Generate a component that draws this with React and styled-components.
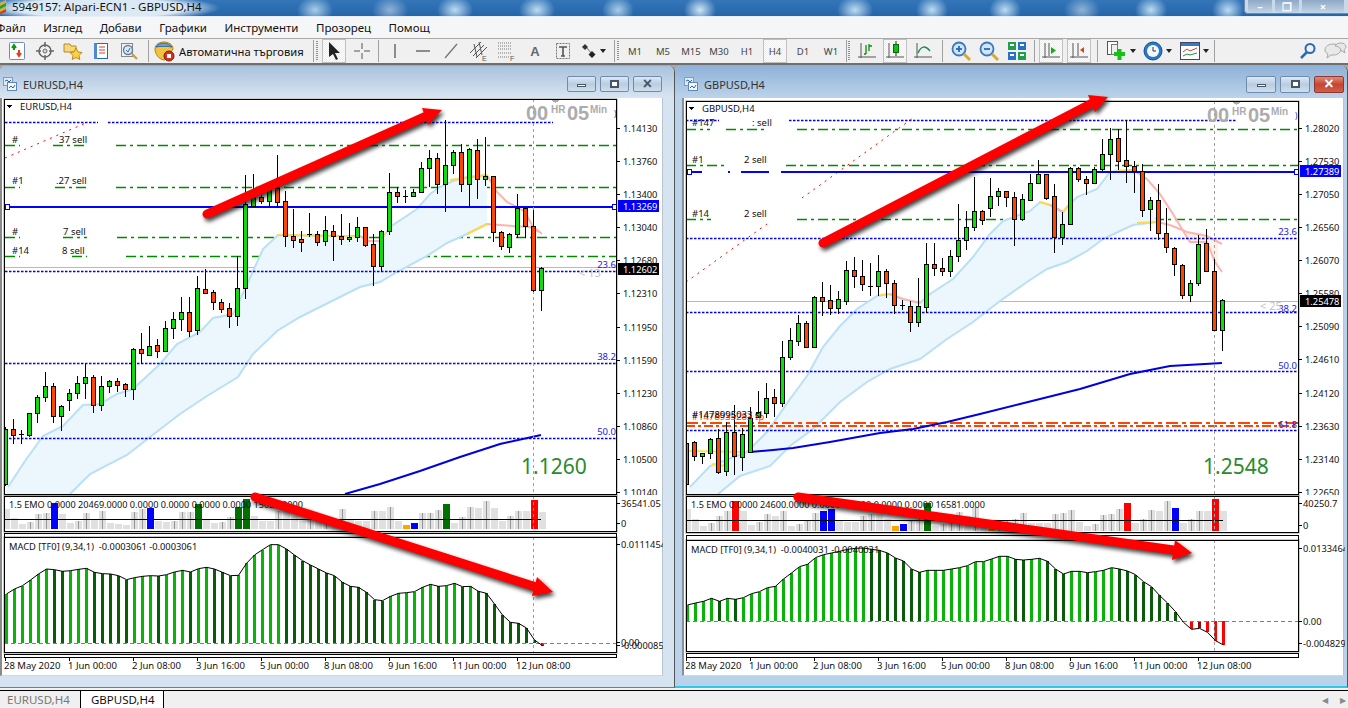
import React from 'react';
import styled, { createGlobalStyle } from 'styled-components';

const GlobalStyle = createGlobalStyle`
	html, body {
		margin: 0;
		padding: 0;
		background: #f0f0f0;
		overflow: hidden;
	}
	body {
		font-family: "Noto Sans", "Liberation Sans", sans-serif;
	}
`;

// candles: wick top, body top, body bottom, wick bottom, 1 = bull
const eurCandles = [
	[428, 430, 485, 487, 1], [420, 430, 436, 445, 0], [431, 435, 435, 445, 0], [414, 414, 436, 438, 1],
	[396, 398, 414, 424, 1], [373, 387, 398, 403, 1], [384, 387, 417, 424, 0], [406, 407, 417, 432, 1],
	[390, 394, 401, 412, 1], [377, 384, 394, 400, 1], [365, 378, 384, 400, 1], [376, 378, 406, 414, 0],
	[377, 387, 406, 412, 1], [381, 382, 387, 394, 1], [379, 382, 386, 393, 0], [384, 385, 390, 398, 0],
	[349, 350, 390, 401, 1], [334, 350, 354, 365, 0], [327, 347, 356, 357, 1], [340, 346, 352, 359, 0],
	[322, 329, 352, 353, 1], [313, 320, 329, 340, 1], [298, 313, 320, 332, 1], [298, 313, 332, 338, 0],
	[277, 289, 331, 336, 1], [270, 290, 294, 295, 0], [291, 293, 303, 311, 0], [300, 303, 310, 314, 0],
	[304, 309, 317, 329, 0], [257, 289, 317, 327, 1], [176, 205, 289, 300, 1], [175, 198, 207, 208, 1],
	[195, 198, 202, 205, 0], [188, 190, 202, 208, 1], [156, 189, 203, 209, 0], [192, 202, 237, 248, 0],
	[210, 237, 241, 249, 0], [232, 240, 243, 253, 0], [214, 235, 235, 238, 0], [232, 235, 243, 247, 0],
	[217, 231, 242, 247, 1], [226, 232, 237, 262, 0], [215, 237, 240, 246, 0], [224, 238, 240, 243, 1],
	[218, 228, 238, 243, 1], [228, 228, 246, 248, 0], [235, 245, 267, 287, 0], [231, 232, 267, 273, 1],
	[174, 193, 232, 236, 1], [188, 193, 197, 204, 0], [191, 197, 197, 204, 0], [190, 193, 197, 197, 1],
	[163, 169, 193, 194, 1], [151, 159, 169, 188, 1], [154, 159, 185, 195, 0], [121, 166, 185, 213, 1],
	[151, 153, 166, 175, 1], [145, 153, 185, 193, 0], [149, 150, 185, 209, 1], [140, 151, 180, 200, 0],
	[138, 177, 180, 187, 1], [177, 177, 233, 243, 0], [232, 233, 247, 251, 0], [234, 235, 248, 254, 1],
	[195, 209, 235, 239, 1], [208, 209, 227, 239, 0], [211, 227, 291, 293, 0], [268, 269, 291, 312, 1],
];

const gbpCandles = [
	[440, 444, 485, 487, 1], [442, 443, 457, 462, 0], [454, 454, 457, 465, 1], [439, 440, 454, 460, 1],
	[430, 439, 473, 475, 0], [423, 433, 472, 477, 1], [406, 433, 457, 476, 0], [429, 435, 458, 472, 1],
	[408, 419, 453, 453, 1], [392, 413, 418, 418, 1], [384, 399, 414, 419, 1], [390, 398, 404, 418, 0],
	[342, 358, 404, 408, 1], [329, 341, 358, 361, 1], [316, 324, 342, 347, 1], [322, 324, 348, 349, 0],
	[297, 298, 348, 349, 1], [283, 298, 302, 317, 0], [286, 301, 309, 316, 0], [292, 300, 309, 315, 1],
	[262, 271, 302, 306, 1], [258, 271, 277, 289, 0], [261, 277, 285, 292, 0], [264, 287, 287, 297, 0],
	[256, 272, 287, 297, 1], [270, 272, 284, 299, 0], [281, 284, 306, 315, 0], [301, 306, 306, 311, 0],
	[302, 307, 323, 333, 0], [279, 307, 323, 328, 1], [244, 265, 308, 314, 1], [244, 265, 269, 277, 0],
	[259, 269, 272, 277, 0], [251, 257, 272, 278, 1], [205, 241, 257, 263, 1], [212, 228, 241, 251, 1],
	[178, 212, 228, 232, 1], [211, 212, 221, 226, 0], [179, 197, 209, 218, 1], [189, 192, 197, 207, 1],
	[192, 192, 198, 208, 0], [193, 198, 220, 247, 0], [195, 200, 220, 222, 1], [175, 184, 201, 202, 1],
	[161, 175, 184, 185, 1], [175, 175, 199, 201, 0], [185, 197, 238, 254, 0], [213, 225, 238, 246, 1],
	[168, 169, 225, 226, 1], [168, 169, 180, 183, 0], [177, 180, 184, 196, 0], [168, 170, 184, 185, 1],
	[140, 155, 170, 172, 1], [129, 140, 155, 181, 1], [130, 139, 162, 171, 0], [121, 161, 167, 184, 0],
	[162, 167, 172, 194, 0], [165, 172, 211, 218, 0], [198, 201, 210, 232, 1], [185, 201, 234, 241, 0],
	[209, 234, 248, 254, 0], [248, 249, 265, 277, 0], [265, 266, 296, 300, 0], [281, 284, 296, 303, 1],
	[236, 245, 284, 287, 1], [230, 244, 272, 273, 0], [260, 272, 331, 332, 0], [300, 301, 331, 352, 1],
];

const eurVol = [
	90, 118, 135, 130, 105, 103, 72, 105, 133, 125, 103, 120, 97, 133, 135, 137, 100, 90, 88, 125, 128, 125, 100,
	98, 75, 123, 133, 130, 115, 85, 60, 110, 125, 125, 95, 95, 110, 125, 110, 120, 115, 125, 90, 120, 125, 125, 97,
	97, 85, 125, 138, 132, 103, 102, 93, 75, 132, 115, 85, 87, 67, 87, 125, 112, 97, 97, 63, 98,
];
const eurVolColors = { 6: '#0000ff', 18: '#0000ff', 24: '#007000', 29: '#007000', 30: '#007000', 50: '#ffa500', 51: '#0000ff', 55: '#007000', 66: '#ff0000' };

const gbpVol = [
	90, 120, 140, 133, 110, 97, 66, 97, 138, 130, 105, 110, 97, 140, 135, 125, 102, 97, 90, 125, 128, 130, 110,
	105, 105, 120, 142, 135, 125, 120, 72, 140, 135, 130, 100, 110, 85, 125, 150, 145, 125, 120, 103, 132, 132, 132,
	105, 103, 93, 130, 140, 135, 108, 105, 90, 72, 132, 120, 93, 96, 66, 87, 132, 120, 96, 96, 60, 96,
];
const gbpVolColors = { 6: '#ff0000', 17: '#0000ff', 18: '#0000ff', 26: '#ffa500', 27: '#0000ff', 30: '#007000', 38: '#ffa500', 55: '#ff0000', 61: '#0000ff', 66: '#ff0000' };

const eurMacd = [
	345, 330, 320, 303, 285, 270, 272, 277, 275, 271, 268, 280, 284, 285, 290, 302, 296, 292, 290, 291, 287, 279, 274,
	279, 269, 265, 270, 280, 290, 289, 253, 228, 212, 197, 197, 210, 228, 245, 258, 270, 282, 290, 310, 322, 325, 340,
	362, 365, 352, 343, 341, 338, 325, 316, 322, 320, 313, 323, 322, 337, 343, 375, 408, 430, 433, 447, 483, 500,
];
const gbpMacd = [
	378, 372, 367, 358, 367, 358, 361, 356, 344, 338, 326, 322, 300, 282, 263, 256, 236, 227, 222, 217, 211, 208, 207,
	211, 214, 222, 237, 246, 270, 280, 274, 274, 274, 270, 266, 260, 248, 248, 240, 232, 232, 241, 243, 241, 238, 247,
	270, 285, 277, 277, 281, 278, 274, 266, 270, 276, 287, 308, 323, 349, 372, 398, 430, 451, 448, 460, 485, 498,
];

const eurBand = {
	upper: [[5, 495], [8, 488], [25, 462], [43, 437], [63, 427], [83, 406], [100, 405], [117, 395], [133, 390], [160, 365], [177, 345], [200, 333], [213, 319], [233, 315], [245, 290], [263, 250], [278, 236], [340, 237], [360, 237], [368, 242], [380, 242], [390, 228], [417, 210], [430, 195], [440, 188], [453, 182], [467, 178], [487, 176]],
	lower: [[70, 495], [90, 475], [127, 456], [150, 438], [180, 415], [207, 397], [238, 378], [253, 355], [277, 332], [300, 318], [340, 298], [360, 288], [380, 283], [397, 273], [427, 257], [447, 244], [467, 235], [487, 225]],
	warm: [
		{ color: '#ffd84a', pts: [[278, 236], [340, 237], [360, 237]] },
		{ color: '#ffb3ae', pts: [[360, 237], [368, 242], [380, 242]] },
		{ color: '#ffd84a', pts: [[380, 242], [385, 235]] },
		{ color: '#ffd84a', pts: [[450, 181], [487, 176]] },
		{ color: '#ffb3ae', pts: [[487, 176], [497, 193], [507, 203], [517, 208], [525, 213], [533, 228], [542, 235]] },
		{ color: '#ffd84a', pts: [[467, 235], [487, 225]] },
		{ color: '#ffb3ae', pts: [[487, 225], [513, 227], [530, 228], [540, 233]] },
	],
	peach: null,
};

const gbpBand = {
	upper: [[686, 495], [690, 488], [710, 467], [747, 453], [767, 433], [790, 400], [807, 377], [823, 348], [840, 327], [857, 310], [877, 297], [890, 295], [903, 300], [920, 304], [930, 295], [953, 280], [973, 258], [990, 235], [1003, 222], [1030, 212], [1040, 203], [1050, 206], [1063, 213], [1068, 207], [1077, 198], [1097, 190], [1110, 173], [1118, 172], [1133, 171]],
	lower: [[718, 495], [740, 477], [770, 467], [790, 447], [813, 430], [840, 403], [867, 383], [890, 370], [920, 360], [947, 340], [973, 323], [1000, 302], [1027, 283], [1047, 270], [1067, 263], [1087, 252], [1103, 240], [1120, 232], [1133, 226], [1157, 223]],
	warm: [
		{ color: '#ffe44a', pts: [[688, 452], [745, 453]] },
		{ color: '#ffe44a', pts: [[712, 465], [722, 467], [728, 464]] },
		{ color: '#ffd84a', pts: [[880, 296], [890, 295]] },
		{ color: '#ffb3ae', pts: [[890, 295], [903, 300], [920, 304]] },
		{ color: '#ffd84a', pts: [[1040, 203], [1050, 206]] },
		{ color: '#ffb3ae', pts: [[1050, 206], [1063, 213]] },
		{ color: '#ffd84a', pts: [[1063, 213], [1068, 207]] },
		{ color: '#ffd84a', pts: [[1118, 172], [1133, 171]] },
		{ color: '#ffb3ae', pts: [[1133, 171], [1147, 180], [1160, 195], [1173, 215], [1182, 230], [1190, 243], [1207, 243], [1215, 263], [1222, 273]] },
		{ color: '#ffd84a', pts: [[1137, 224], [1157, 223]] },
		{ color: '#ffb3ae', pts: [[1157, 223], [1170, 226], [1187, 233], [1207, 237], [1222, 245]] },
	],
	peach: '1187,234 1207,238 1218,243 1218,270 1207,243 1190,243',
};

const eur = {
	symbol: 'EURUSD,H4',
	active: false,
	left: 4,
	plotWidth: 613,
	rows: { main: [100, 396], gapA: 1, vol: [497, 36], gapB: 1, stripA: 4, macd: [538, 116], gapC: 1, stripB: 3 },
	candles: eurCandles,
	vol: eurVol,
	volColors: eurVolColors,
	volBase: 530,
	volLine: 520,
	macd: eurMacd,
	macdZero: 644,
	band: eurBand,
	ma: [[345, 495], [380, 485], [420, 472], [460, 458], [500, 445], [541, 436]],
	blueDash: [[5, 98, 123], [108, 553, 123], [5, 617, 272], [5, 617, 364], [5, 617, 439]],
	greenDash: [[5, 20, 146], [53, 87, 146], [116, 616, 146], [5, 20, 188], [55, 87, 188], [116, 616, 188], [5, 20, 238], [63, 87, 238], [117, 616, 238], [5, 20, 257], [72, 87, 257], [126, 616, 257]],
	blueSolid: [[8, 617]],
	blueY: 207,
	grayY: 268,
	redDots: [[5, 159, 88, 123]],
	cursor: 533,
	clock: [526, 114],
	fibs: [['23.6', 266], ['38.2', 358], ['50.0', 433]],
	fibX: 616,
	ghost: ['< 13', 579, 278],
	bigPrice: ['1.1260', 521, 475],
	orders: [
		['#', 12, 144], ['37 sell', 59, 144],
		['#1', 12, 185], ['.27 sell', 56, 185],
		['#', 12, 236], ['7 sell', 63, 236],
		['#14', 12, 255], ['8 sell', 62, 255],
	],
	legendVol: '1.5 EMO 0.0000 20469.0000 0.0000 0.0000 0.0000 0.0000 15028.0000',
	legendMacd: 'MACD [TF0] (9,34,1)\u00a0\u00a0-0.0003061 -0.0003061',
	prices: [['1.14130', 129], ['1.13760', 162], ['1.13400', 195], ['1.13040', 228], ['1.12680', 261], ['1.12310', 294], ['1.11950', 328], ['1.11590', 361], ['1.11230', 394], ['1.10860', 427], ['1.10500', 460], ['1.10140', 493]],
	bluePrice: ['1.13269', 207],
	blackPrice: ['1.12602', 270],
	volScale: [['36541.05', 504], ['0', 524]],
	macdScale: [['0.0111454', 545], ['0.00', 643], ['-0.0000851', 646]],
	dates: [['28 May 2020', 5], ['1 Jun 00:00', 69], ['2 Jun 08:00', 133], ['3 Jun 16:00', 197], ['5 Jun 00:00', 261], ['8 Jun 08:00', 325], ['9 Jun 16:00', 389], ['11 Jun 00:00', 453], ['12 Jun 08:00', 517]],
};

const gbp = {
	symbol: 'GBPUSD,H4',
	active: true,
	left: 686,
	plotWidth: 613,
	rows: { main: [102, 394], gapA: 1, vol: [497, 37], gapB: 2, stripA: 5, macd: [541, 112], gapC: 1, stripB: 4 },
	candles: gbpCandles,
	vol: gbpVol,
	volColors: gbpVolColors,
	volBase: 532,
	volLine: 521,
	macd: gbpMacd,
	macdZero: 622,
	band: gbpBand,
	ma: [[750, 453], [773, 451], [793, 449], [830, 443], [880, 434], [913, 430], [947, 423], [980, 415], [1020, 405], [1080, 390], [1130, 375], [1170, 367], [1222, 364]],
	blueDash: [[686, 719, 121], [789, 1237, 121], [686, 1299, 239], [686, 1299, 313], [686, 1299, 372], [686, 1299, 431]],
	greenDash: [[686, 710, 130], [726, 767, 130], [797, 1298, 130], [686, 725, 166], [786, 1298, 166], [686, 711, 220], [797, 1298, 220]],
	blueSolid: [[688, 702], [728, 730], [741, 769], [781, 1299]],
	blueY: 172,
	grayY: 302,
	redDots: [[686, 283, 767, 225], [802, 199, 913, 119]],
	orange: [[686, 1299, 423], [686, 1299, 426]],
	cursor: 1214,
	clock: [1207, 116],
	fibs: [['23.6', 233], ['38.2', 310], ['50.0', 367], ['61.8', 426]],
	fibX: 1297,
	ghost: ['< 25', 1260, 311],
	bigPrice: ['1.2548', 1203, 475],
	orders: [
		['#147', 692, 127], [': sell', 752, 127],
		['#1', 692, 164], ['2 sell', 744, 164],
		['#14', 692, 218], ['2 sell', 744, 218],
	],
	stacked: [['#1478935283 tp', 692, 421, '#ff4500'], ['#1478995033 sl', 692, 419, '#000']],
	legendVol: '1.5 EMO 0.0000 24600.0000 0.0000 0.0000 0.0000 0.0000 16581.0000',
	legendMacd: 'MACD [TF0] (9,34,1)\u00a0\u00a0-0.0040031 -0.0040031',
	prices: [['1.28020', 129], ['1.27530', 162], ['1.27050', 195], ['1.26560', 228], ['1.26070', 261], ['1.25580', 294], ['1.25090', 327], ['1.24610', 360], ['1.24120', 394], ['1.23630', 427], ['1.23140', 460], ['1.22650', 493]],
	bluePrice: ['1.27389', 172],
	blackPrice: ['1.25478', 302],
	volScale: [['40250.7', 504], ['0', 526]],
	macdScale: [['0.0133464', 549], ['0.00', 622], ['-0.004829', 644]],
	dates: [['28 May 2020', 686], ['1 Jun 00:00', 750], ['2 Jun 08:00', 814], ['3 Jun 16:00', 878], ['5 Jun 00:00', 942], ['8 Jun 08:00', 1006], ['9 Jun 16:00', 1070], ['11 Jun 00:00', 1134], ['12 Jun 08:00', 1198]],
};

const Page = styled.div`
	position: relative;
	width: 1348px;
	height: 708px;
	overflow: hidden;
	display: flex;
	flex-direction: column;
	background: #f0f0f0;
`;

const TitleBar = styled.div`
	height: 16px;
	flex: none;
	display: flex;
	align-items: center;
	justify-content: space-between;
	color: #111;
	font-size: 11.5px;
	border-bottom: 1px solid #e8eef6;
	background:
		radial-gradient(ellipse 16px 14px at 700px 10px, #cfe6f6 0%, rgba(207, 230, 246, 0) 100%),
		radial-gradient(ellipse 18px 14px at 855px 10px, #bcdcf2 0%, rgba(188, 220, 242, 0) 100%),
		radial-gradient(ellipse 16px 14px at 932px 10px, #bcdcf2 0%, rgba(188, 220, 242, 0) 100%),
		radial-gradient(ellipse 16px 14px at 1005px 10px, #bcdcf2 0%, rgba(188, 220, 242, 0) 100%),
		radial-gradient(ellipse 18px 14px at 1082px 10px, #8fb3d6 0%, rgba(143, 179, 214, 0) 100%),
		radial-gradient(ellipse 16px 14px at 1151px 10px, #bcdcf2 0%, rgba(188, 220, 242, 0) 100%),
		radial-gradient(ellipse 16px 14px at 1228px 10px, #bcdcf2 0%, rgba(188, 220, 242, 0) 100%),
		radial-gradient(ellipse 16px 14px at 618px 10px, #a9cde8 0%, rgba(169, 205, 232, 0) 100%),
		radial-gradient(ellipse 18px 14px at 537px 10px, #bcdcf2 0%, rgba(188, 220, 242, 0) 100%),
		radial-gradient(ellipse 18px 14px at 455px 10px, #bcdcf2 0%, rgba(188, 220, 242, 0) 100%),
		radial-gradient(ellipse 18px 14px at 390px 10px, #8fb3d6 0%, rgba(143, 179, 214, 0) 100%),
		radial-gradient(ellipse 18px 14px at 315px 10px, #a9cde8 0%, rgba(169, 205, 232, 0) 100%),
		radial-gradient(ellipse 120px 14px at 100px 8px, #dbe9f4 0%, #dbe9f4 70%, rgba(219, 233, 244, 0) 100%),
		linear-gradient(#3476b8, #2566ab);
`;

const AppBadge = styled.svg`
	flex: none;
	margin-right: 2px;
`;

const TitleLeft = styled.div`
	display: flex;
	align-items: center;
	padding-bottom: 2px;
`;

const TitleText = styled.span`
	margin-left: 4px;
	line-height: 14px;
	white-space: nowrap;
`;

const FrameButtons = styled.div`
	display: flex;
	height: 13px;
	align-self: flex-start;
	padding: 0 4px 0 3px;
	gap: 3px;
	background: #c8d9ea;
	border: 1px solid #7089a8;
	border-top: 0;
	border-right: 0;
	border-radius: 0 0 0 4px;
`;

const FrameButton = styled.div`
	width: ${(p) => p.$w}px;
	display: flex;
	align-items: center;
	justify-content: center;
	color: #fff;
	font-size: 11px;
	font-weight: 700;
	background: linear-gradient(#8da8c6, #c3d5e7);
	border-radius: 0 0 3px 3px;
`;

const MenuBar = styled.div`
	height: 21px;
	flex: none;
	display: flex;
	gap: 17.5px;
	padding-left: 0;
	align-items: center;
	font-size: 11.5px;
	color: #111;
	background: #f5f6f7;
	border-bottom: 1px solid #a8a8a8;
`;

const MenuItem = styled.span`
	white-space: nowrap;
	&:first-child {
		margin-left: -4px;
	}
`;

const Toolbar = styled.div`
	height: 26px;
	flex: none;
	display: flex;
	align-items: center;
	padding-left: 3px;
	background: #f0f0f0;
	border-bottom: 2px solid #6f6f6f;
	box-sizing: border-box;
`;

const Tool = styled.div`
	width: ${(p) => p.$w || 28}px;
	height: 24px;
	flex: none;
	display: flex;
	align-items: center;
	justify-content: ${(p) => (p.$start ? 'flex-start' : 'center')};
	font-size: 9.5px;
	color: #444;
	box-sizing: border-box;
	white-space: nowrap;
	${(p) =>
		p.$active &&
		`
		border: 1px solid #c0c0c0;
		margin: 0 2px;
		width: 24px;
		background: repeating-conic-gradient(#ffffff 0% 25%, #ededed 0% 50%) 0 0 / 2px 2px;
	`}
`;

const ToolSep = styled.div`
	width: 1px;
	height: 22px;
	flex: none;
	margin-left: ${(p) => p.$l ?? 3}px;
	margin-right: ${(p) => p.$r ?? 3}px;
	background: #a0a0a0;
`;

const Grip = styled.div`
	width: 2px;
	height: 20px;
	flex: none;
	margin-right: ${(p) => p.$r ?? 2}px;
	background: repeating-linear-gradient(#909090 0 1px, transparent 1px 2px);
`;

const AutoLabel = styled.span`
	font-size: 11.2px;
	color: #111;
	margin-left: 4px;
`;

const Caret = styled.span`
	width: 0;
	height: 0;
	margin-left: 3px;
	border-left: 3px solid transparent;
	border-right: 3px solid transparent;
	border-top: 4px solid #222;
`;

const Spacer = styled.div`
	flex: 1;
`;

const Workspace = styled.div`
	flex: 1;
	min-height: 0;
	display: flex;
	gap: 0;
	box-sizing: border-box;
	background: #a8a8a8;
	padding-top: 1px;
	border-bottom: 2px solid #f2f2f2;
`;

const ChartWindow = styled.section`
	width: ${(p) => p.$w}px;
	height: 622px;
	flex: none;
	box-sizing: border-box;
	display: flex;
	flex-direction: column;
	border-radius: 6px 6px 0 0;
	background: ${(p) => (p.$active ? '#b9d2ec' : '#d6e4f2')};
	border-right: 1px solid #555;
	border-bottom: ${(p) => (p.$active ? '2px solid #2ec8e8' : '1px solid #6f7f90')};
`;

const WindowTitle = styled.header`
	height: ${(p) => p.$h}px;
	flex: none;
	display: flex;
	align-items: center;
	box-sizing: border-box;
	padding-top: 4px;
	padding-left: ${(p) => p.$pl}px;
	padding-right: ${(p) => p.$pr}px;
	font-size: 11px;
	color: #333;
	border-radius: 6px 6px 0 0;
	background: ${(p) =>
		p.$active ? 'linear-gradient(#8fb2d8, #bcd3ea)' : 'linear-gradient(#a9c2dc, #d8e5f2)'};
`;

const WindowName = styled.span`
	margin-left: 6px;
	flex: 1;
`;

const Ctl = styled.div`
	width: ${(p) => p.$w}px;
	height: ${(p) => p.$h}px;
	margin-left: ${(p) => p.$m}px;
	box-sizing: border-box;
	display: flex;
	align-items: center;
	justify-content: center;
	border: 1px solid ${(p) => (p.$red ? '#8a3a32' : '#6f8cac')};
	border-radius: 2px;
	background: ${(p) =>
		p.$red ? 'linear-gradient(#e08a7a, #c6452f 50%, #d0604a)' : 'linear-gradient(#dde8f3, #b9cde2 50%, #cfdeec)'};
`;

const CtlBar = styled.span`
	width: 9px;
	height: 3px;
	margin-top: 3px;
	border: 1px solid #46566a;
	background: #fff;
	box-sizing: border-box;
`;

const CtlSquare = styled.span`
	width: 9px;
	height: 8px;
	border: 2px solid #46566a;
	background: #fff;
	box-sizing: border-box;
`;

const CtlCross = styled.span`
	font: 700 16px/1 "Liberation Sans", sans-serif;
	color: ${(p) => (p.$red ? '#fff' : '#46566a')};
`;

const WindowBody = styled.div`
	width: ${(p) => p.$w}px;
	height: 578px;
	margin-left: ${(p) => p.$ml}px;
	flex: none;
	box-sizing: border-box;
	background: #fff;
	border-left: 2px solid ${(p) => (p.$active ? '#8a8f96' : '#8a8a8a')};
	border-right: 1px solid #b8c4d0;
	border-bottom: 1px solid #d0d8e0;
	padding-top: ${(p) => p.$pt}px;
	padding-left: ${(p) => p.$pl}px;
`;

const ChartRow = styled.div`
	display: flex;
	margin-top: ${(p) => p.$gap || 0}px;
`;

const PlotFrame = styled.svg`
	display: block;
	width: ${(p) => p.$w}px;
	height: ${(p) => p.$h}px;
	flex: none;
	box-sizing: border-box;
	border: 1px solid #000;
	box-shadow: 0 0 0 0.6px rgba(0, 0, 0, 0.35);
	overflow: hidden;
	shape-rendering: crispEdges;
	background: #fff;

	text {
		font-family: "Noto Sans", "Liberation Sans", sans-serif;
		font-size: 9.5px;
		shape-rendering: auto;
		fill: #111;
	}
`;

const AxisFrame = styled.svg`
	display: block;
	width: 46px;
	height: ${(p) => p.$h}px;
	flex: none;
	overflow: hidden;
	shape-rendering: crispEdges;

	text {
		font-family: "Noto Sans", "Liberation Sans", sans-serif;
		font-size: 9.3px;
		fill: #111;
	}
`;

const Strip = styled.div`
	width: ${(p) => p.$w}px;
	height: ${(p) => p.$h}px;
	box-sizing: border-box;
	border: 1px solid #000;
	border-bottom: 0;
	margin-top: ${(p) => p.$gap || 0}px;
`;

const TimeAxis = styled.svg`
	display: block;
	width: 613px;
	height: 20px;
	box-sizing: border-box;
	border-top: 1px solid #000;
	overflow: hidden;
	shape-rendering: crispEdges;

	text {
		font-family: "Noto Sans", "Liberation Sans", sans-serif;
		font-size: 9.5px;
		fill: #111;
	}
`;

const ClockNum = styled.text`
	&& {
		font-family: "Liberation Sans", sans-serif;
		font-weight: 700;
		font-size: ${(p) => p.$s}px;
		fill: #acacac;
	}
`;

const BigPrice = styled.text`
	&& {
		font-family: "Noto Sans", sans-serif;
		font-size: 21px;
		fill: #2b8a2b;
	}
`;

const FibText = styled.text`
	&& {
		fill: #2020e8;
	}
`;

const GhostText = styled.text`
	&& {
		fill: #c4c4c4;
		font-size: 11px;
	}
`;

const LegendText = styled.text`
	&& {
		font-size: ${(p) => p.$s}px;
	}
`;

const TinyMark = styled.text`
	&& {
		fill: #2020e8;
		font-size: 8px;
	}
`;

const TabBar = styled.div`
	height: 18px;
	flex: none;
	display: flex;
	align-items: stretch;
	box-sizing: border-box;
	border-top: 1px solid #000;
	background: #f0f0f0;
	font-size: 11.5px;
`;

const Tab = styled.div`
	box-sizing: border-box;
	width: ${(p) => p.$w}px;
	padding-left: ${(p) => p.$pl}px;
	line-height: 17px;
	border-right: 1px solid #000;
	color: ${(p) => (p.$active ? '#111' : '#777')};
	background: ${(p) => (p.$active ? '#fff' : '#f0f0f0')};
`;

const TabScroll = styled.div`
	margin-left: auto;
	display: flex;
	align-items: center;
	gap: 12px;
	padding-right: 2px;
	color: #8a8a8a;
	font-size: 8px;
`;

const ArrowLayer = styled.svg`
	position: absolute;
	left: 0;
	top: 0;
	width: 1348px;
	height: 708px;
	pointer-events: none;
	filter: drop-shadow(2px 3px 2px rgba(0, 0, 0, 0.75));
`;

const poly = (pts) => pts.map((p) => p.join(',')).join(' ');

const HDash = ({ x1, x2, y, color, dash, width = 1 }) => (
	<line x1={x1} x2={x2} y1={y + 0.5} y2={y + 0.5} stroke={color} strokeWidth={width} strokeDasharray={dash} />
);

// thin dashed levels, a bit wider than a pixel as in the blurry capture
const SoftDash = ({ x1, x2, y, color, dash }) => (
	<line x1={x1} x2={x2} y1={y + 0.5} y2={y + 0.5} stroke={color} strokeWidth={1.35} strokeDasharray={dash} shapeRendering="auto" />
);

const Candle = ({ c, i, left }) => {
	const cx = left + 0.5 + 8 * i + (left === 4 ? 1 : 0);
	const [wt, bt, bb, wb, up] = c;
	return (
		<g>
			<line x1={cx} x2={cx} y1={wt} y2={wb} stroke="#000" />
			{bt === bb ? (
				<line x1={cx - 2.5} x2={cx + 2.5} y1={bt + 0.5} y2={bt + 0.5} stroke="#000" />
			) : (
				<rect x={cx - 2} y={bt + 0.5} width={4} height={bb - bt} fill={up ? '#08e008' : '#ff4500'} stroke="#000" />
			)}
		</g>
	);
};

// the svg border takes one pixel on each side, the viewBox has to leave it out
const paneBox = (left, top, w, h) => `${left + 1} ${top + 1} ${w - 2} ${h - 2}`;

const MainPlot = ({ d }) => {
	const [top, h] = d.rows.main;
	const b = d.band;
	return (
		<PlotFrame $w={d.plotWidth} $h={h} viewBox={paneBox(d.left, top, d.plotWidth, h)}>
			{d.greenDash.map(([a, c, y], i) => (
				<SoftDash key={i} x1={a} x2={c} y={y} color="#008a00" dash="10 4 3 4" />
			))}
			<HDash x1={d.left} x2={d.left + d.plotWidth} y={d.grayY} color="#b9b9b9" />
			<polygon points={poly([...b.upper, ...[...b.lower].reverse()])} fill="#ebf6fd" />
			{b.peach && <polygon points={b.peach} fill="#fdf0e6" />}
			<g shapeRendering="auto" fill="none">
				<polyline points={poly(b.upper.slice(1))} stroke="#b9e0f7" strokeWidth="2" />
				<polyline points={poly(b.lower)} stroke="#b9e0f7" strokeWidth="2" />
				{b.warm.map((w, i) => (
					<polyline key={i} points={poly(w.pts)} stroke={w.color} strokeWidth="2" />
				))}
			</g>
			{d.blueDash.map(([a, c, y], i) => (
				<SoftDash key={i} x1={a} x2={c} y={y} color="#0000f0" dash="2.5 1.5" />
			))}
			{d.redDots.map(([x1, y1, x2, y2], i) => (
				<line key={i} x1={x1} y1={y1} x2={x2} y2={y2} stroke="#ff0000" strokeDasharray="2 5" shapeRendering="auto" />
			))}
			{d.orange &&
				d.orange.map(([a, c, y], i) => (
					<HDash key={i} x1={a} x2={c} y={y} color="#ff4500" dash={i ? '9 3 3 3' : '12 4 4 4'} width={2} />
				))}
			<polyline points={poly(d.ma)} fill="none" stroke="#0000e0" strokeWidth="2" shapeRendering="auto" />
			{d.blueSolid.map(([a, c], i) => (
				<HDash key={i} x1={a} x2={c} y={d.blueY} color="#0000ff" width={2} />
			))}
			<rect x={d.left + 1.5} y={d.blueY - 2} width={4} height={5} fill="#fff" stroke="#0000ff" />
			<rect x={d.left + d.plotWidth - 4.5} y={d.blueY - 2} width={4} height={5} fill="#fff" stroke="#0000ff" />
			<line x1={d.cursor + 0.5} x2={d.cursor + 0.5} y1={top} y2={top + h} stroke="#a0a0a0" strokeDasharray="3 3" />
			{d.candles.map((c, i) => (
				<Candle key={i} c={c} i={i} left={d.left} />
			))}
			<polygon points={`${d.left + 3},${top + 6} ${d.left + 8},${top + 6} ${d.left + 5.5},${top + 9}`} fill="#000" />
			<text x={d.left + 16} y={top + 11}>{d.symbol}</text>
			{d.orders.map(([t, x, y], i) => (
				<text key={i} x={x} y={y}>{t}</text>
			))}
			{d.stacked &&
				d.stacked.map(([t, x, y, fill], i) => (
					<text key={i} x={x} y={y} style={{ fill }}>{t}</text>
				))}
			<polygon points={`${d.cursor + 17},${top} ${d.cursor + 28},${top} ${d.cursor + 22.5},${top + 4}`} fill="#acacac" />
			<ClockNum $s={20} x={d.clock[0]} y={d.clock[1] + 7}>00</ClockNum>
			<ClockNum $s={10} x={d.clock[0] + 25} y={d.clock[1]}>HR</ClockNum>
			<ClockNum $s={20} x={d.clock[0] + 41} y={d.clock[1] + 7}>05</ClockNum>
			<ClockNum $s={10} x={d.clock[0] + 64} y={d.clock[1]}>Min</ClockNum>
			<TinyMark x={d.clock[0] + 88} y={d.clock[1] + 4}>)</TinyMark>
			{d.fibs.map(([t, y], i) => (
				<FibText key={i} x={d.fibX} y={y + 3} textAnchor="end">{t}</FibText>
			))}
			<GhostText x={d.ghost[1]} y={d.ghost[2]}>{d.ghost[0]}</GhostText>
			<BigPrice x={d.bigPrice[1]} y={d.bigPrice[2]}>{d.bigPrice[0]}</BigPrice>
		</PlotFrame>
	);
};

const VolumePlot = ({ d }) => {
	const [top, h] = d.rows.vol;
	return (
		<PlotFrame $w={d.plotWidth} $h={h} viewBox={paneBox(d.left, top, d.plotWidth, h)}>
			{d.vol.map((p, i) => {
				const cx = d.left + 1 + 8 * i + (d.left === 4 ? 1 : 0);
				const y = Math.round(480 + p / 3);
				const color = d.volColors[i];
				const rising = i > 0 && p < d.vol[i - 1];
				return (
					<g key={i}>
						<rect x={cx - 3} y={y} width={7} height={d.volBase - y} fill={color || '#e0e0e0'} />
						{!color && rising && <rect x={cx} y={y} width={1} height={d.volBase - y} fill="#969696" />}
					</g>
				);
			})}
			<line x1={d.left} x2={d.left + 537} y1={d.volLine + 0.5} y2={d.volLine + 0.5} stroke="#000" />
			<line x1={d.cursor + 0.5} x2={d.cursor + 0.5} y1={top} y2={top + h} stroke="#a0a0a0" strokeDasharray="3 3" />
			<LegendText $s={9.15} x={d.left + 5} y={top + 12}>{d.legendVol}</LegendText>
		</PlotFrame>
	);
};

const MacdPlot = ({ d }) => {
	const [top, h] = d.rows.macd;
	const pts = d.macd.map((p, i) => [d.left + 1.5 + 8 * i + (d.left === 4 ? 1 : 0), 480 + p / 3]);
	const zero = d.macdZero;
	return (
		<PlotFrame $w={d.plotWidth} $h={h} viewBox={paneBox(d.left, top, d.plotWidth, h)}>
			{pts.map(([x, y], i) => {
				const below = y > zero;
				const rising = i === 0 || d.macd[i] <= d.macd[i - 1];
				let fill = rising ? '#0ab30a' : '#0a5c0a';
				if (below) fill = rising ? '#8b0f0f' : '#ff0000';
				return (
					<rect key={i} x={x - 1.5} y={below ? zero : y} width={3} height={Math.max(Math.abs(zero - y), 1)} fill={fill} />
				);
			})}
			<line x1={d.left} x2={d.left + d.plotWidth} y1={zero + 0.5} y2={zero + 0.5} stroke="#808080" strokeDasharray="4 3" />
			<polyline points={poly(pts)} fill="none" stroke="#000" shapeRendering="auto" />
			<line x1={d.cursor + 0.5} x2={d.cursor + 0.5} y1={top} y2={top + h} stroke="#a0a0a0" strokeDasharray="3 3" />
			<LegendText $s={9.3} x={d.left + 5} y={top + 13}>{d.legendMacd}</LegendText>
		</PlotFrame>
	);
};

const PriceAxis = ({ d }) => {
	const [top, h] = d.rows.main;
	const x0 = d.left + d.plotWidth;
	const boxY = (y) => y - 6;
	return (
		<AxisFrame $h={h} viewBox={`${x0} ${top} 46 ${h}`}>
			{d.prices.map(([t, y]) => (
				<g key={t}>
					<line x1={x0} x2={x0 + 3} y1={y + 0.5} y2={y + 0.5} stroke="#000" />
					<text x={x0 + 6} y={y + 3.5}>{t}</text>
				</g>
			))}
			<rect x={x0 + 1} y={boxY(d.bluePrice[1])} width={41} height={12} fill="#0000ff" />
			<text x={x0 + 6} y={d.bluePrice[1] + 3.5} style={{ fill: '#fff' }}>{d.bluePrice[0]}</text>
			<rect x={x0 + 1} y={boxY(d.blackPrice[1])} width={41} height={12} fill="#000" />
			<text x={x0 + 6} y={d.blackPrice[1] + 3.5} style={{ fill: '#fff' }}>{d.blackPrice[0]}</text>
		</AxisFrame>
	);
};

const SubAxis = ({ d, rows, labels }) => {
	const [top, h] = rows;
	const x0 = d.left + d.plotWidth;
	return (
		<AxisFrame $h={h} viewBox={`${x0} ${top} 46 ${h}`}>
			{labels.map(([t, y], i) => (
				<g key={i}>
					<line x1={x0} x2={x0 + 3} y1={y + 0.5} y2={y + 0.5} stroke="#000" />
					<text x={x0 + 4} y={y + 3.5}>{t}</text>
				</g>
			))}
		</AxisFrame>
	);
};

const TimeScale = ({ d }) => (
	<TimeAxis viewBox={`${d.left} 659 613 19`}>
		{d.dates.map(([t, x]) => (
			<g key={t}>
				<line x1={x + 0.5} x2={x + 0.5} y1={658} y2={662} stroke="#000" />
				<text x={x - 1} y={670}>{t}</text>
			</g>
		))}
	</TimeAxis>
);

const MiniChartIcon = () => (
	<svg width="14" height="14" viewBox="0 0 14 14">
		<rect x="0.5" y="0.5" width="9" height="8" fill="#dfeaf8" stroke="#7d9cc4" />
		<rect x="4.5" y="5.5" width="9" height="8" fill="#f4f8fd" stroke="#5f86bb" />
		<path d="M2 4l2-1 2 2 2-2M6 11l2-2 2 2 2-3" stroke="#2d64b3" fill="none" />
	</svg>
);

const ChartWin = ({ d, width, title, bodyW, bodyMl, bodyPl, bodyPt, ctl }) => {
	const r = d.rows;
	return (
		<ChartWindow $w={width} $active={d.active}>
			<WindowTitle $h={title.h} $pl={title.pl} $pr={title.pr} $active={d.active}>
				<MiniChartIcon />
				<WindowName>{d.symbol}</WindowName>
				<Ctl $w={ctl[0]} $h={ctl[1]} $m={0} $red={false}><CtlBar /></Ctl>
				<Ctl $w={ctl[0]} $h={ctl[1]} $m={4}><CtlSquare /></Ctl>
				<Ctl $w={ctl[0]} $h={ctl[1]} $m={4} $red={d.active}><CtlCross $red={d.active}>×</CtlCross></Ctl>
			</WindowTitle>
			<WindowBody $w={bodyW} $ml={bodyMl} $pl={bodyPl} $pt={bodyPt} $active={d.active}>
				<ChartRow>
					<MainPlot d={d} />
					<PriceAxis d={d} />
				</ChartRow>
				<ChartRow $gap={r.gapA}>
					<VolumePlot d={d} />
					<SubAxis d={d} rows={r.vol} labels={d.volScale} />
				</ChartRow>
				<Strip $w={d.plotWidth} $h={r.stripA} $gap={r.gapB} />
				<ChartRow>
					<MacdPlot d={d} />
					<SubAxis d={d} rows={r.macd} labels={d.macdScale} />
				</ChartRow>
				<Strip $w={d.plotWidth} $h={r.stripB} $gap={r.gapC} />
				<TimeScale d={d} />
			</WindowBody>
		</ChartWindow>
	);
};

// toolbar drawings
const IconNewProfile = () => (
	<svg width="18" height="20" viewBox="0 0 18 20">
		<rect x="1.5" y="1.5" width="15" height="17" rx="1" fill="#fff" stroke="#6f8fb8" />
		<path d="M6 9V5M4 7l2-3 2 3" stroke="#0a9a0a" strokeWidth="2" fill="none" />
		<path d="M11 9v5M9 12l2 3 2-3" stroke="#e04020" strokeWidth="2" fill="none" />
	</svg>
);
const IconTarget = () => (
	<svg width="20" height="20" viewBox="0 0 20 20" fill="none" stroke="#666">
		<circle cx="10" cy="10" r="6" strokeWidth="1.5" />
		<circle cx="10" cy="10" r="2" fill="#ddd" />
		<path d="M10 1v5M10 14v5M1 10h5M14 10h5" strokeWidth="1.5" />
	</svg>
);
const IconFolderStar = () => (
	<svg width="20" height="20" viewBox="0 0 20 20">
		<path d="M1 3h6l1 2h5v6H1z" fill="#f6d77a" stroke="#b48a2a" />
		<path d="M13 7l2 4 4 .5-3 3 .8 4-3.8-2-3.8 2 .8-4-3-3 4-.5z" fill="#ffd23a" stroke="#b48a2a" />
	</svg>
);
const IconBook = () => (
	<svg width="18" height="20" viewBox="0 0 18 20">
		<rect x="2.5" y="2.5" width="13" height="15" fill="#fff" stroke="#2a66b8" />
		<rect x="2" y="2" width="3" height="16" fill="#4a88d8" />
		<path d="M7 6h6M7 9h6M7 12h6" stroke="#d04040" />
	</svg>
);
const IconTester = () => (
	<svg width="20" height="20" viewBox="0 0 20 20" fill="none">
		<rect x="2.5" y="2.5" width="11" height="13" fill="#eef3f9" stroke="#888" />
		<circle cx="9" cy="9" r="4.5" fill="#dce8f5" stroke="#6a7d94" strokeWidth="1.4" />
		<path d="M13 13l5 5" stroke="#c9a23a" strokeWidth="2.4" />
		<path d="M7 9l2 2 2-4" stroke="#3a6ab0" />
	</svg>
);
const IconAuto = () => (
	<svg width="22" height="22" viewBox="0 0 22 22">
		<path d="M2 9c0-5 5-7 9-7s9 2 9 7l-8 11C6 20 2 14 2 9z" fill="#f2c43c" stroke="#a88420" />
		<path d="M3 7c3-5 12-5 16 0-5-1-11-1-16 0z" fill="#6fa6d8" stroke="#2f6aa8" />
		<circle cx="16" cy="16" r="5" fill="#d63020" stroke="#80180f" />
		<rect x="14" y="14" width="4" height="4" fill="#fff" />
	</svg>
);
const IconCursor = () => (
	<svg width="14" height="20" viewBox="0 0 14 20">
		<path d="M2 1v15l4-3 3 6 2-1-3-6h5z" fill="#222" />
	</svg>
);
const IconCross = () => (
	<svg width="20" height="20" viewBox="0 0 20 20" stroke="#555">
		<path d="M10 2v6M10 12v6M2 10h6M12 10h6" />
	</svg>
);
const IconVLine = () => (
	<svg width="14" height="20" viewBox="0 0 14 20" stroke="#555"><path d="M7 3v14" strokeWidth="1.3" /></svg>
);
const IconHLine = () => (
	<svg width="16" height="20" viewBox="0 0 16 20" stroke="#555"><path d="M1 10h14" strokeWidth="1.3" /></svg>
);
const IconDiag = () => (
	<svg width="16" height="20" viewBox="0 0 16 20" stroke="#777"><path d="M2 17L14 3" strokeWidth="1.3" /></svg>
);
const IconChannel = () => (
	<svg width="20" height="22" viewBox="0 0 20 22" stroke="#555" fill="none">
		<path d="M1 13L12 2M4 16L15 5M7 18L18 7M5 4l3 13M10 2l3 13" />
		<text x="13" y="21" fontSize="7" stroke="none" fill="#555" fontFamily="Liberation Sans">E</text>
	</svg>
);
const IconFibo = () => (
	<svg width="20" height="22" viewBox="0 0 20 22" stroke="#777" fill="none" strokeDasharray="1 1">
		<path d="M1 3h14M1 6h14M1 9h14M1 13h14M1 17h12" />
		<text x="13" y="21" fontSize="7" stroke="none" fill="#555" fontFamily="Liberation Sans">F</text>
	</svg>
);
const IconA = styled.span`
	font: 700 13px "Liberation Sans", sans-serif;
	color: #666;
`;
const IconT = () => (
	<svg width="18" height="20" viewBox="0 0 18 20" fill="none">
		<rect x="2.5" y="2.5" width="13" height="15" stroke="#777" strokeDasharray="2 1" />
		<path d="M5 6h8M9 6v9M7 15h4" stroke="#555" strokeWidth="1.6" />
	</svg>
);
const IconArrows = () => (
	<svg width="16" height="18" viewBox="0 0 16 18">
		<path d="M5 5l6 7" stroke="#666" fill="none" />
		<path d="M4 2l3 3-3 3-3-3z" fill="#333" />
		<path d="M11 9l3.500 3.500-3.500 3.500-3.500-3.500z" fill="#222" />
	</svg>
);
const ChartAxes = ({ children, stroke = '#555' }) => (
	<svg width="22" height="22" viewBox="0 0 22 22" fill="none">
		<path d="M5 3v15M2 17h18" stroke={stroke} />
		{children}
	</svg>
);
const IconBars = () => (
	<ChartAxes>
		<path d="M10 14V5M8 14h2M13 11V4M13 6h3" stroke="#0a8a0a" strokeWidth="1.3" />
	</ChartAxes>
);
const IconCandles = () => (
	<ChartAxes>
		<path d="M12 1v15" stroke="#222" />
		<rect x="9.5" y="4.500" width="5" height="8" fill="#10c010" stroke="#0a6a0a" />
	</ChartAxes>
);
const IconLineChart = () => (
	<ChartAxes>
		<path d="M6 13c3-7 7-8 12-2" stroke="#1f8a4a" strokeWidth="1.5" />
	</ChartAxes>
);
const IconZoom = ({ minus }) => (
	<svg width="22" height="22" viewBox="0 0 22 22" fill="none">
		<circle cx="9" cy="9" r="6.5" fill="#cfe6f8" stroke="#3a78c0" strokeWidth="1.8" />
		<path d="M6 9h6" stroke="#2a68b0" strokeWidth="1.8" />
		{!minus && <path d="M9 6v6" stroke="#2a68b0" strokeWidth="1.8" />}
		<path d="M14 14l6 6" stroke="#d2aa3c" strokeWidth="3" />
	</svg>
);
const IconTile = () => (
	<svg width="20" height="20" viewBox="0 0 20 20">
		<rect x="1" y="1" width="8" height="8" fill="#1f9f4a" />
		<rect x="11" y="1" width="8" height="8" fill="#2a70c8" />
		<rect x="1" y="11" width="8" height="8" fill="#2a70c8" />
		<rect x="11" y="11" width="8" height="8" fill="#1f9f4a" />
		<path d="M3 4h4M13 4h4M3 14h4M13 14h4" stroke="#fff" strokeWidth="2" />
	</svg>
);
const IconAutoScroll = () => (
	<ChartAxes>
		<path d="M9 3v13" stroke="#555" />
		<path d="M11 7v7l5-3.500z" fill="#10b010" />
	</ChartAxes>
);
const IconShift = () => (
	<ChartAxes>
		<path d="M10 3v13" stroke="#555" />
		<path d="M12 10l4-3v6z" fill="#e04020" />
	</ChartAxes>
);
const IconNewChart = () => (
	<svg width="22" height="24" viewBox="0 0 22 24">
		<rect x="2.5" y="2.5" width="10" height="13" fill="#fff" stroke="#555" />
		<rect x="6.5" y="5.5" width="6" height="10" fill="#eee" stroke="#777" />
		<path d="M9 13h11v4H9zM12.500 10h4v11h-4z" fill="#16c016" />
	</svg>
);
const IconClock = () => (
	<svg width="20" height="20" viewBox="0 0 20 20" fill="none">
		<circle cx="10" cy="10" r="9" fill="#2a78c8" stroke="#13508f" />
		<circle cx="10" cy="10" r="6" fill="#f4f8fc" />
		<path d="M10 6v4h3" stroke="#333" />
	</svg>
);
const IconTemplate = () => (
	<svg width="20" height="18" viewBox="0 0 20 18" fill="none">
		<rect x="0.5" y="0.500" width="19" height="17" fill="#fff" stroke="#446" />
		<rect x="1" y="1" width="18" height="3" fill="#3a78c0" />
		<path d="M3 10l4-3 3 2 7-3" stroke="#d04030" />
		<path d="M3 14l4-2 3 1 7-2" stroke="#209040" />
	</svg>
);
const IconSearch = () => (
	<svg width="18" height="18" viewBox="0 0 18 18" fill="none">
		<circle cx="11" cy="6.500" r="4.500" stroke="#2a68b8" strokeWidth="2" />
		<path d="M8 10l-6 6" stroke="#2a68b8" strokeWidth="2.500" />
	</svg>
);
const IconChat = () => (
	<svg width="24" height="20" viewBox="0 0 24 20" fill="#e8e8e8" stroke="#a8a8a8">
		<path d="M10 3c-4 0-8 2-8 6 0 2 1 3 3 4l-1 4 4-3h3c4 0 7-3 7-6s-4-5-8-5z" />
		<path d="M18 2c-3 0-5 1-6 3 3 0 6 2 6 5h1l3 2-1-3c1-1 2-2 2-3 0-3-3-4-5-4z" />
	</svg>
);

const ToolbarRow = () => (
	<Toolbar>
		<Tool><IconNewProfile /></Tool>
		<Tool><IconTarget /></Tool>
		<Tool><IconFolderStar /></Tool>
		<Tool><IconBook /></Tool>
		<Tool><IconTester /></Tool>
		<ToolSep $l={5} $r={4} />
		<Tool $w={158} $start>
			<IconAuto />
			<AutoLabel>Автоматична търговия</AutoLabel>
		</Tool>
		<ToolSep $l={2} $r={2} />
		<Grip $r={2} />
		<Tool $active><IconCursor /></Tool>
		<Tool><IconCross /></Tool>
		<ToolSep $l={2} $r={2} />
		<Tool><IconVLine /></Tool>
		<Tool><IconHLine /></Tool>
		<Tool><IconDiag /></Tool>
		<Tool><IconChannel /></Tool>
		<Tool><IconFibo /></Tool>
		<Tool><IconA>A</IconA></Tool>
		<Tool><IconT /></Tool>
		<Tool $w={32}><IconArrows /><Caret /></Tool>
		<ToolSep $l={5} $r={2} />
		<Grip $r={2} />
		<Tool>M1</Tool>
		<Tool>M5</Tool>
		<Tool>M15</Tool>
		<Tool>M30</Tool>
		<Tool>H1</Tool>
		<Tool $active>H4</Tool>
		<Tool>D1</Tool>
		<Tool>W1</Tool>
		<ToolSep $l={1} $r={1} />
		<Grip $r={3} />
		<Tool><IconBars /></Tool>
		<Tool $active><IconCandles /></Tool>
		<Tool><IconLineChart /></Tool>
		<ToolSep $l={5} $r={4} />
		<Tool><IconZoom /></Tool>
		<Tool><IconZoom minus /></Tool>
		<Tool><IconTile /></Tool>
		<ToolSep $l={3} $r={2} />
		<Tool $active><IconAutoScroll /></Tool>
		<Tool $active><IconShift /></Tool>
		<ToolSep $l={4} $r={4} />
		<Tool $w={37}><IconNewChart /><Caret /></Tool>
		<Tool $w={36}><IconClock /><Caret /></Tool>
		<Tool $w={38}><IconTemplate /><Caret /></Tool>
		<ToolSep $l={1} $r={1} />
		<Spacer />
		<Tool><IconSearch /></Tool>
		<Tool $w={26}><IconChat /></Tool>
	</Toolbar>
);

const Arrow = ({ from, tip, head }) => (
	<g>
		<line x1={from[0]} y1={from[1]} x2={(head[0][0] + head[1][0]) / 2} y2={(head[0][1] + head[1][1]) / 2} stroke="#ff0000" strokeWidth="9" strokeLinecap="round" />
		<polygon points={poly([tip, ...head])} fill="#ff0000" />
	</g>
);

const menus = ['Файл', 'Изглед', 'Добави', 'Графики', 'Инструменти', 'Прозорец', 'Помощ'];

export default function App() {
	return (
		<Page>
			<GlobalStyle />
			<TitleBar>
				<TitleLeft>
					<AppBadge width="6" height="14" viewBox="0 0 6 14">
						<path d="M0 3l6-3v3l-6 3zM0 9l6-3v3l-6 3z" fill="#e0b020" />
						<path d="M0 6l6-3v3l-6 3z" fill="#20a040" />
						<path d="M0 12l6-3v3l-6 2z" fill="#d04020" />
					</AppBadge>
					<TitleText>5949157: Alpari-ECN1 - GBPUSD,H4</TitleText>
				</TitleLeft>
				<FrameButtons>
					<FrameButton $w={24}>–</FrameButton>
					<FrameButton $w={24}>❐</FrameButton>
					<FrameButton $w={42}>×</FrameButton>
				</FrameButtons>
			</TitleBar>
			<MenuBar>
				{menus.map((m) => (
					<MenuItem key={m}>{m}</MenuItem>
				))}
			</MenuBar>
			<ToolbarRow />
			<Workspace>
				<ChartWin
					d={eur}
					width={675}
					title={{ h: 32, pl: 3, pr: 12 }}
					ctl={[29, 16]}
					bodyW={663}
					bodyMl={0}
					bodyPl={2}
					bodyPt={1}
				/>
				<ChartWin
					d={gbp}
					width={673}
					title={{ h: 32, pl: 9, pr: 3 }}
					ctl={[30, 17]}
					bodyW={662}
					bodyMl={7}
					bodyPl={2}
					bodyPt={3}
				/>
			</Workspace>
			<TabBar>
				<Tab $w={81} $pl={7}>EURUSD,H4</Tab>
				<Tab $w={83} $pl={10} $active>GBPUSD,H4</Tab>
				<TabScroll>
					<span>◀</span>
					<span>▶</span>
				</TabScroll>
			</TabBar>
			<ArrowLayer viewBox="0 0 1348 708">
				<Arrow from={[207, 214]} tip={[442, 110]} head={[[422, 108], [428, 125]]} />
				<Arrow from={[255, 497]} tip={[553, 592]} head={[[537, 577], [532, 596]]} />
				<Arrow from={[823, 243]} tip={[1108, 97]} head={[[1088, 95], [1095, 112]]} />
				<Arrow from={[798, 497]} tip={[1192, 553]} head={[[1175, 540], [1172, 560]]} />
			</ArrowLayer>
		</Page>
	);
}
